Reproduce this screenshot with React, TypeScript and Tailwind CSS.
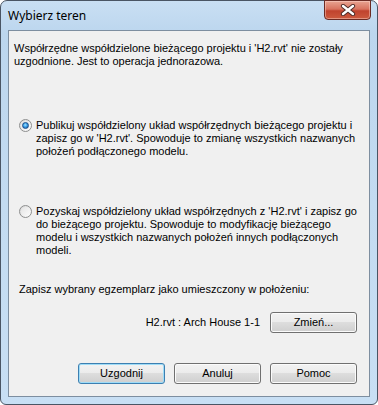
import React from 'react';

const FONT = { fontFamily: 'Tahoma, "Liberation Sans", Arial, sans-serif' };

function Radio({ checked }: { checked?: boolean }) {
  return (
    <div className="mt-[0px] w-[13px] h-[13px] shrink-0 rounded-full border border-[#8e8f8f] bg-[linear-gradient(135deg,#d6d6d6,#ffffff)] flex items-center justify-center">
      <div className="w-[9px] h-[9px] rounded-full bg-[linear-gradient(135deg,#e4e4e4,#fbfbfb)] flex items-center justify-center">
        {checked && (
          <div className="w-[7px] h-[7px] rounded-full border border-[#1b4f8a] bg-[radial-gradient(circle_at_45%_40%,#a9e6ff_0%,#3aa0e8_45%,#154d99_100%)]" />
        )}
      </div>
    </div>
  );
}

function WinButton({ label, isDefault }: { label: string; isDefault?: boolean }) {
  return (
    <button
      className={
        'w-[87px] h-[21px] rounded-[3px] border text-[11px] text-black leading-none ' +
        'bg-[linear-gradient(#f2f2f2_0%,#ebebeb_50%,#dddddd_50%,#cfcfcf_100%)] ' +
        (isDefault
          ? 'border-[#3c7fb1] shadow-[inset_0_0_0_1px_#9fdcf7]'
          : 'border-[#707070] shadow-[inset_0_0_0_1px_#fbfbfb]')
      }
      style={FONT}
    >
      {label}
    </button>
  );
}

export default function App() {
  return (
    <div className="w-[378px] h-[405px] bg-white">
      <div className="relative w-[378px] h-[405px] rounded-t-[7px] rounded-b-[6px] border border-[#4a5564] bg-[linear-gradient(180deg,#c9dff3_0%,#bcd6ee_8%,#c3dbf1_50%,#c8dff4_100%)] flex flex-col">
        {/* Title bar */}
        <div className="h-[29px] flex items-center pl-[7px] shrink-0">
          <span className="text-[12px] text-black" style={{ fontFamily: '"Noto Sans", "Open Sans", sans-serif' }}>
            Wybierz teren
          </span>
        </div>
        <div className="absolute top-[-1px] right-[6px] w-[47px] h-[20px] rounded-b-[4px] border border-[#6b2b24] bg-[linear-gradient(180deg,#e8a492_0%,#d8735f_45%,#c0432e_55%,#cc5a3e_100%)] shadow-[inset_0_0_0_1px_rgba(255,220,210,0.45)] flex items-center justify-center">
          <svg width="16" height="12" viewBox="0 0 16 12">
            <path d="M3 2 L13 10 M13 2 L3 10" stroke="#4a2a26" strokeWidth="4.2" strokeLinecap="round" />
            <path d="M3 2 L13 10 M13 2 L3 10" stroke="#ffffff" strokeWidth="2.4" strokeLinecap="round" />
          </svg>
        </div>

        {/* Client area */}
        <div
          className="mx-[7px] h-[367px] border border-[#7d8ea0] bg-[#f0f0f0] flex flex-col text-[11px] leading-[13px] text-black"
          style={FONT}
        >
          <p className="mt-[11px] ml-[5px]">
            Współrzędne współdzielone bieżącego projektu i 'H2.rvt' nie zostały
            <br />
            uzgodnione. Jest to operacja jednorazowa.
          </p>

          <div className="mt-[51px] ml-[10px] flex gap-[4px]">
            <Radio checked />
            <p>
              Publikuj współdzielony układ współrzędnych bieżącego projektu i
              <br />
              zapisz go w 'H2.rvt'. Spowoduje to zmianę wszystkich nazwanych
              <br />
              położeń podłączonego modelu.
            </p>
          </div>

          <div className="mt-[47px] ml-[10px] flex gap-[4px]">
            <Radio />
            <p>
              Pozyskaj współdzielony układ współrzędnych z 'H2.rvt' i zapisz go
              <br />
              do bieżącego projektu. Spowoduje to modyfikację bieżącego
              <br />
              modelu i wszystkich nazwanych położeń innych podłączonych
              <br />
              modeli.
            </p>
          </div>

          <p className="mt-[26px] ml-[10px]">Zapisz wybrany egzemplarz jako umieszczony w położeniu:</p>

          <div className="mt-[16px] mr-[12px] flex items-center justify-end gap-[10px]">
            <span>H2.rvt : Arch House 1-1</span>
            <WinButton label="Zmień..." />
          </div>

          <div className="mt-auto mb-[12px] mr-[12px] flex justify-end gap-[9px]">
            <WinButton label="Uzgodnij" isDefault />
            <WinButton label="Anuluj" />
            <WinButton label="Pomoc" />
          </div>
        </div>
      </div>
    </div>
  );
}
